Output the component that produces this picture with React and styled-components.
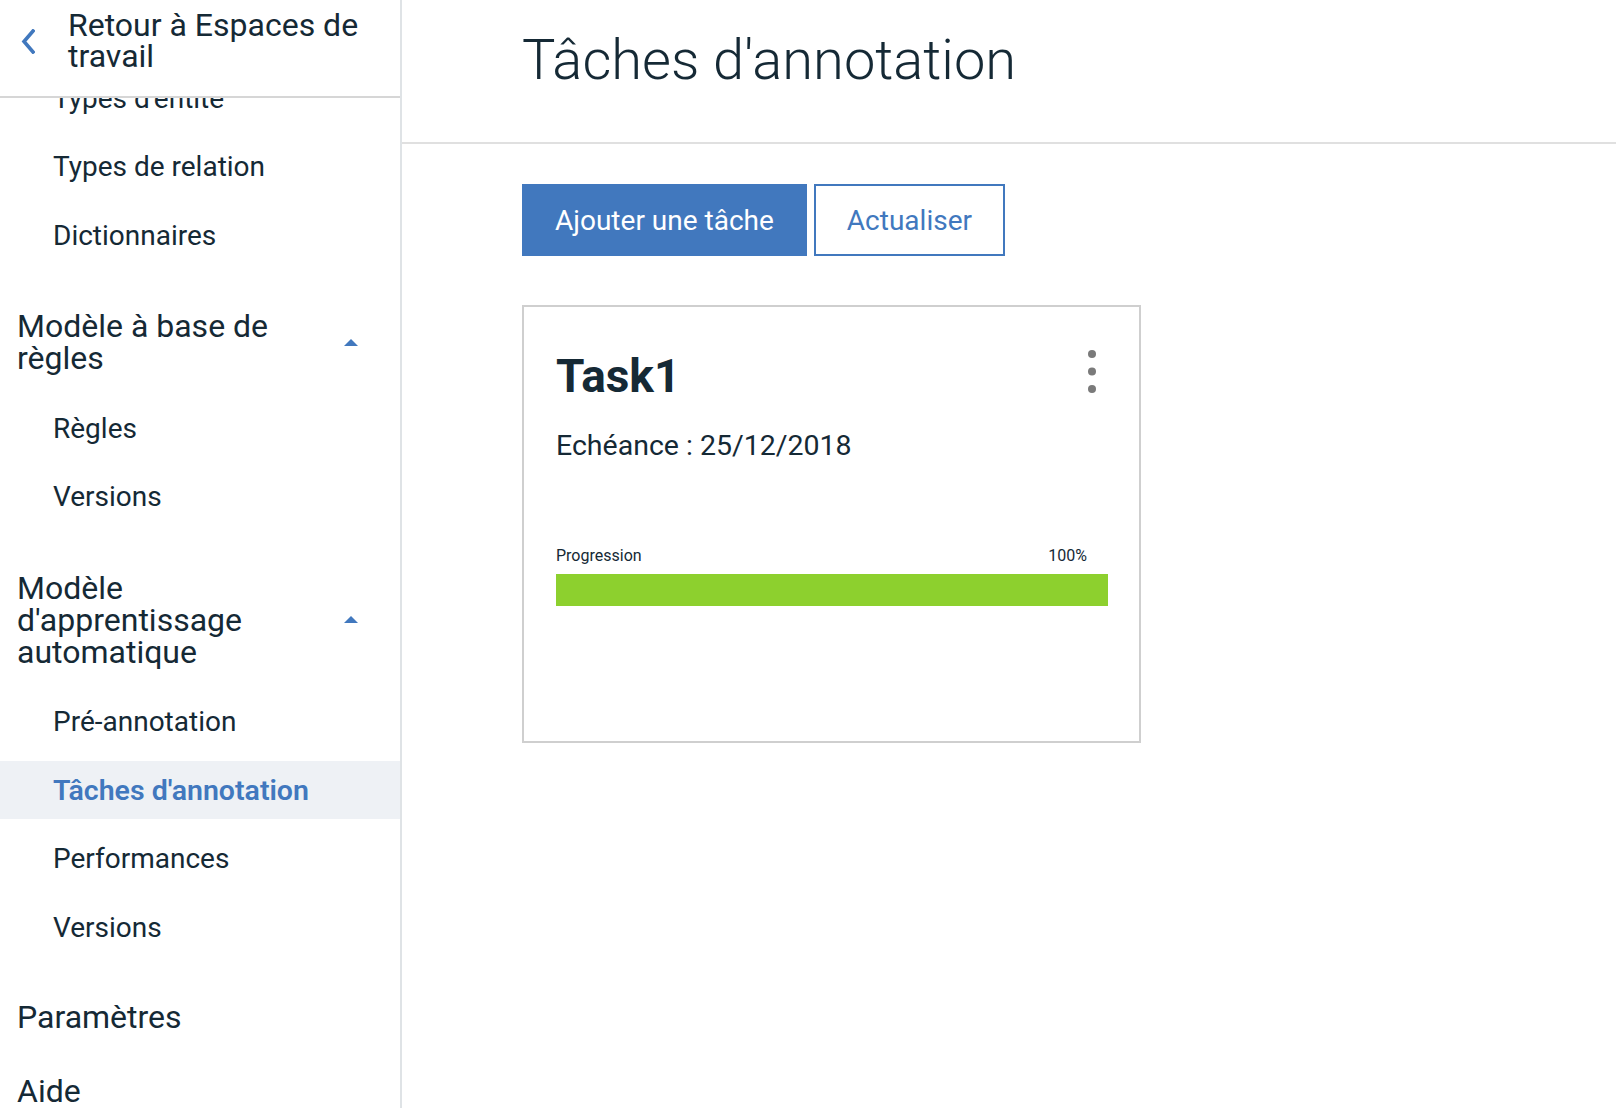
import React, { useLayoutEffect, useRef } from 'react';
import styled, { createGlobalStyle } from 'styled-components';

const GlobalStyle = createGlobalStyle`
  html, body, #root {
    margin: 0;
    padding: 0;
    height: 100%;
  }
  body {
    font-family: Roboto, "Liberation Sans", sans-serif;
    color: #152935;
    background: #fff;
    overflow: hidden;
  }
  * {
    box-sizing: border-box;
  }
`;

const Layout = styled.div`
  display: flex;
  height: 100vh;
`;

const Sidebar = styled.aside`
  width: 402px;
  flex-shrink: 0;
  height: 100%;
  display: flex;
  flex-direction: column;
  border-right: 2px solid #dfe3e6;
`;

const BackBar = styled.div`
  height: 98px;
  flex-shrink: 0;
  padding: 10px 0 0 21px;
  border-bottom: 2px solid #d6d6d6;
`;

const BackLink = styled.a`
  display: flex;
  align-items: center;
  gap: 33px;
  color: #152935;
  text-decoration: none;
  cursor: pointer;
`;

const BackText = styled.span`
  max-width: 310px;
  font-size: 32px;
  line-height: 31px;
`;

const NavScroll = styled.nav`
  flex: 1;
  overflow-y: auto;
  scrollbar-width: none;
  padding-bottom: 40px;
  &::-webkit-scrollbar {
    display: none;
  }
`;

const Group = styled.section`
  padding-top: ${p => (p.$first ? '0' : '46px')};
`;

const GroupHeading = styled.div`
  display: flex;
  align-items: center;
  padding: 0 42px 0 17px;
  cursor: pointer;
`;

const HeadingText = styled.span`
  max-width: 300px;
  font-size: 32px;
  line-height: 32px;
`;

const Caret = styled.svg`
  margin-left: auto;
  flex-shrink: 0;
`;

const SubList = styled.div`
  display: flex;
  flex-direction: column;
  gap: 10.5px;
  margin-top: ${p => (p.$offset ? '25px' : '0')};
`;

const NavItem = styled.a`
  display: flex;
  align-items: center;
  height: 58px;
  padding-left: 53px;
  font-size: ${p => (p.$active ? '28.5px' : '28px')};
  text-decoration: none;
  cursor: pointer;
  color: ${p => (p.$active ? '#4178be' : '#152935')};
  font-weight: ${p => (p.$active ? 600 : 400)};
  background: ${p => (p.$active ? '#eef1f5' : 'transparent')};
`;

const TopLinks = styled.div`
  display: flex;
  flex-direction: column;
  gap: 16px;
  padding-top: 32px;
`;

const TopLink = styled.a`
  display: flex;
  align-items: center;
  height: 58px;
  padding-left: 17px;
  font-size: 32px;
  color: #152935;
  text-decoration: none;
  cursor: pointer;
`;

const Main = styled.main`
  flex: 1;
  min-width: 0;
  display: flex;
  flex-direction: column;
`;

const PageHeader = styled.header`
  height: 144px;
  flex-shrink: 0;
  padding: 25px 0 0 120px;
  border-bottom: 2px solid #e0e0e0;
`;

const PageTitle = styled.h1`
  margin: 0;
  font-size: 56px;
  font-weight: 300;
  line-height: 70px;
  color: #152935;
`;

const Content = styled.div`
  padding: 40px 0 0 120px;
`;

const Toolbar = styled.div`
  display: flex;
  gap: 7px;
`;

const Button = styled.button`
  height: 72px;
  padding: 0 31px;
  font-family: inherit;
  font-size: 28px;
  border: 2px solid #4178be;
  background: ${p => (p.$primary ? '#4178be' : '#fff')};
  color: ${p => (p.$primary ? '#fff' : '#4178be')};
  cursor: pointer;
`;

const Card = styled.article`
  margin-top: 49px;
  width: 619px;
  height: 438px;
  border: 2px solid #cfcfcf;
  padding: 41px 31px 0 32px;
`;

const CardHead = styled.div`
  display: flex;
  justify-content: space-between;
  align-items: flex-start;
`;

const CardTitle = styled.h2`
  margin: 0;
  font-size: 46px;
  font-weight: 700;
  line-height: 56px;
  color: #152935;
`;

const MenuButton = styled.button`
  display: flex;
  margin: 2px 12px 0 0;
  padding: 0;
  border: 0;
  background: none;
  color: #7a7a7a;
  cursor: pointer;
`;

const DueDate = styled.p`
  margin: 24px 0 0;
  font-size: 28.5px;
  line-height: 36px;
`;

const ProgressLabels = styled.div`
  display: flex;
  justify-content: space-between;
  margin-top: 81px;
  padding-right: 21px;
  font-size: 16px;
  line-height: 22px;
`;

const Track = styled.div`
  margin-top: 7px;
  height: 32px;
  background: #e0e0e0;
`;

const Fill = styled.div`
  height: 100%;
  background: #8dd02e;
`;

const groups = [
  { items: ["Types d'entité", 'Types de relation', 'Dictionnaires'] },
  { title: 'Modèle à base de règles', items: ['Règles', 'Versions'] },
  {
    title: "Modèle d'apprentissage automatique",
    items: ['Pré-annotation', "Tâches d'annotation", 'Performances', 'Versions'],
  },
];

const activeItem = "Tâches d'annotation";

const tasks = [{ name: 'Task1', due: '25/12/2018', progress: 100 }];

const ChevronLeft = () => (
  <svg width="14" height="25" viewBox="0 0 14 25">
    <polyline
      points="12,2 3,12.5 12,23"
      fill="none"
      stroke="#4178be"
      strokeWidth="3.6"
      strokeLinecap="square"
      strokeLinejoin="miter"
    />
  </svg>
);

const CaretUp = () => (
  <Caret width="14" height="7" viewBox="0 0 14 7">
    <polygon points="0,7 7,0 14,7" fill="#4178be" />
  </Caret>
);

const Kebab = () => (
  <svg width="8" height="43" viewBox="0 0 8 43">
    <circle cx="4" cy="4" r="4" fill="currentColor" />
    <circle cx="4" cy="21.5" r="4" fill="currentColor" />
    <circle cx="4" cy="39" r="4" fill="currentColor" />
  </svg>
);

const TaskCard = ({ task }) => (
  <Card>
    <CardHead>
      <CardTitle>{task.name}</CardTitle>
      <MenuButton aria-label="Options">
        <Kebab />
      </MenuButton>
    </CardHead>
    <DueDate>Echéance : {task.due}</DueDate>
    <ProgressLabels>
      <span>Progression</span>
      <span>{task.progress}%</span>
    </ProgressLabels>
    <Track>
      <Fill style={{ width: `${task.progress}%` }} />
    </Track>
  </Card>
);

const App = () => {
  const navRef = useRef(null);

  useLayoutEffect(() => {
    if (navRef.current) navRef.current.scrollTop = 29;
  }, []);

  return (
    <Layout>
      <GlobalStyle />
      <Sidebar>
        <BackBar>
          <BackLink>
            <ChevronLeft />
            <BackText>Retour à Espaces de travail</BackText>
          </BackLink>
        </BackBar>
        <NavScroll ref={navRef}>
          {groups.map((g, i) => (
            <Group key={i} $first={!g.title}>
              {g.title && (
                <GroupHeading>
                  <HeadingText>{g.title}</HeadingText>
                  <CaretUp />
                </GroupHeading>
              )}
              <SubList $offset={!!g.title}>
                {g.items.map(item => (
                  <NavItem key={item} $active={item === activeItem}>
                    {item}
                  </NavItem>
                ))}
              </SubList>
            </Group>
          ))}
          <TopLinks>
            <TopLink>Paramètres</TopLink>
            <TopLink>Aide</TopLink>
          </TopLinks>
        </NavScroll>
      </Sidebar>
      <Main>
        <PageHeader>
          <PageTitle>Tâches d'annotation</PageTitle>
        </PageHeader>
        <Content>
          <Toolbar>
            <Button $primary>Ajouter une tâche</Button>
            <Button>Actualiser</Button>
          </Toolbar>
          {tasks.map(t => (
            <TaskCard key={t.name} task={t} />
          ))}
        </Content>
      </Main>
    </Layout>
  );
};

export default App;
